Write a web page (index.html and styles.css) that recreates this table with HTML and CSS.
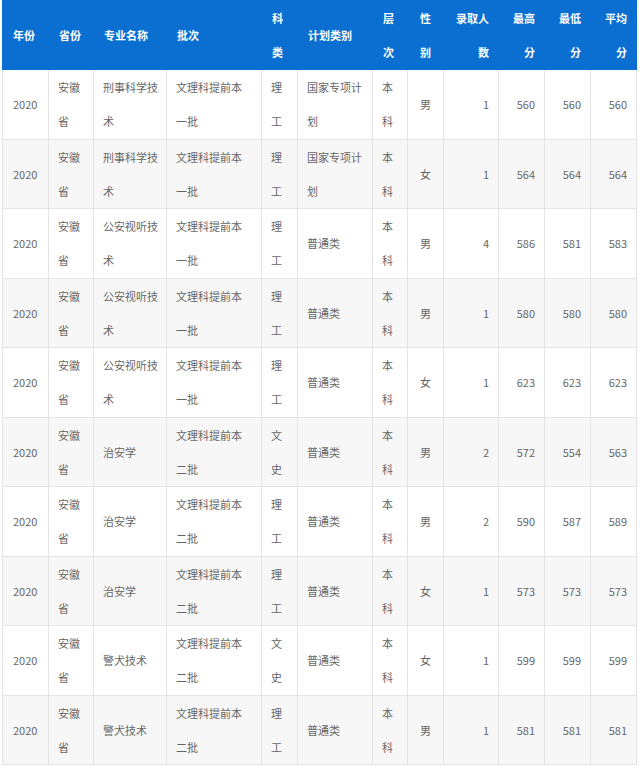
FILE: index.html
```html
<!DOCTYPE html>
<html lang="zh">
<head>
<meta charset="utf-8">
<title>录取分数</title>
<link rel="stylesheet" href="styles.css">
</head>
<body>
<table class="scores">
  <colgroup>
    <col class="c1"><col class="c2"><col class="c3"><col class="c4"><col class="c5"><col class="c6">
    <col class="c7"><col class="c8"><col class="c9"><col class="c10"><col class="c11"><col class="c12">
  </colgroup>
  <thead>
    <tr>
      <th>年份</th><th>省份</th><th>专业名称</th><th>批次</th><th>科<br>类</th><th>计划类别</th>
      <th>层<br>次</th><th class="sex">性<br>别</th><th class="num">录取人<br>数</th><th class="num">最高<br>分</th><th class="num">最低<br>分</th><th class="num">平均<br>分</th>
    </tr>
  </thead>
  <tbody>
    <tr>
      <td>2020</td><td>安徽<br>省</td><td>刑事科学技<br>术</td><td>文理科提前本<br>一批</td><td>理<br>工</td><td>国家专项计<br>划</td>
      <td>本<br>科</td><td class="sex">男</td><td class="num">1</td><td class="num">560</td><td class="num">560</td><td class="num">560</td>
    </tr>
    <tr>
      <td>2020</td><td>安徽<br>省</td><td>刑事科学技<br>术</td><td>文理科提前本<br>一批</td><td>理<br>工</td><td>国家专项计<br>划</td>
      <td>本<br>科</td><td class="sex">女</td><td class="num">1</td><td class="num">564</td><td class="num">564</td><td class="num">564</td>
    </tr>
    <tr>
      <td>2020</td><td>安徽<br>省</td><td>公安视听技<br>术</td><td>文理科提前本<br>一批</td><td>理<br>工</td><td>普通类</td>
      <td>本<br>科</td><td class="sex">男</td><td class="num">4</td><td class="num">586</td><td class="num">581</td><td class="num">583</td>
    </tr>
    <tr>
      <td>2020</td><td>安徽<br>省</td><td>公安视听技<br>术</td><td>文理科提前本<br>一批</td><td>理<br>工</td><td>普通类</td>
      <td>本<br>科</td><td class="sex">男</td><td class="num">1</td><td class="num">580</td><td class="num">580</td><td class="num">580</td>
    </tr>
    <tr>
      <td>2020</td><td>安徽<br>省</td><td>公安视听技<br>术</td><td>文理科提前本<br>一批</td><td>理<br>工</td><td>普通类</td>
      <td>本<br>科</td><td class="sex">女</td><td class="num">1</td><td class="num">623</td><td class="num">623</td><td class="num">623</td>
    </tr>
    <tr>
      <td>2020</td><td>安徽<br>省</td><td>治安学</td><td>文理科提前本<br>二批</td><td>文<br>史</td><td>普通类</td>
      <td>本<br>科</td><td class="sex">男</td><td class="num">2</td><td class="num">572</td><td class="num">554</td><td class="num">563</td>
    </tr>
    <tr>
      <td>2020</td><td>安徽<br>省</td><td>治安学</td><td>文理科提前本<br>二批</td><td>理<br>工</td><td>普通类</td>
      <td>本<br>科</td><td class="sex">男</td><td class="num">2</td><td class="num">590</td><td class="num">587</td><td class="num">589</td>
    </tr>
    <tr>
      <td>2020</td><td>安徽<br>省</td><td>治安学</td><td>文理科提前本<br>二批</td><td>理<br>工</td><td>普通类</td>
      <td>本<br>科</td><td class="sex">女</td><td class="num">1</td><td class="num">573</td><td class="num">573</td><td class="num">573</td>
    </tr>
    <tr>
      <td>2020</td><td>安徽<br>省</td><td>警犬技术</td><td>文理科提前本<br>二批</td><td>文<br>史</td><td>普通类</td>
      <td>本<br>科</td><td class="sex">女</td><td class="num">1</td><td class="num">599</td><td class="num">599</td><td class="num">599</td>
    </tr>
    <tr>
      <td>2020</td><td>安徽<br>省</td><td>警犬技术</td><td>文理科提前本<br>二批</td><td>理<br>工</td><td>普通类</td>
      <td>本<br>科</td><td class="sex">男</td><td class="num">1</td><td class="num">581</td><td class="num">581</td><td class="num">581</td>
    </tr>
  </tbody>
</table>
</body>
</html>
```
FILE: styles.css
```css
html, body {
  margin: 0;
  padding: 0;
  background: #ffffff;
}

body {
  font-family: "Noto Sans CJK SC", "Noto Sans", sans-serif;
  font-size: 11px;
  color: #666666;
}

.scores {
  margin-left: 2px;
  width: 634px;
  table-layout: fixed;
  border-collapse: collapse;
  border-spacing: 0;
}

.c1 { width: 46px; }
.c2 { width: 45px; }
.c3 { width: 73px; }
.c4 { width: 95px; }
.c5 { width: 36px; }
.c6 { width: 75px; }
.c7 { width: 35px; }
.c8 { width: 36px; }
.c9 { width: 55px; }
.c10 { width: 46px; }
.c11 { width: 46px; }
.c12 { width: 46px; }

.scores th {
  background: #0a6fd0;
  color: #ffffff;
  font-weight: 700;
  text-align: left;
  height: 69px;
  padding: 0 0 0 10px;
  line-height: 34px;
  border: 1px solid #0a6fd0;
  box-sizing: border-box;
  vertical-align: middle;
}

.scores td {
  height: 69.5px;
  padding: 0 0 0 9px;
  line-height: 34px;
  border: 1px solid #e4e4e4;
  box-sizing: border-box;
  vertical-align: middle;
  text-align: left;
}

.scores tbody tr:nth-child(even) td {
  background: #f7f7f7;
}

.scores td:first-child,
.scores th:first-child {
  padding-left: 10px;
}

.scores .sex {
  padding-left: 12px;
}

.scores .num {
  text-align: right;
  padding: 0 9px 0 0;
}
```
